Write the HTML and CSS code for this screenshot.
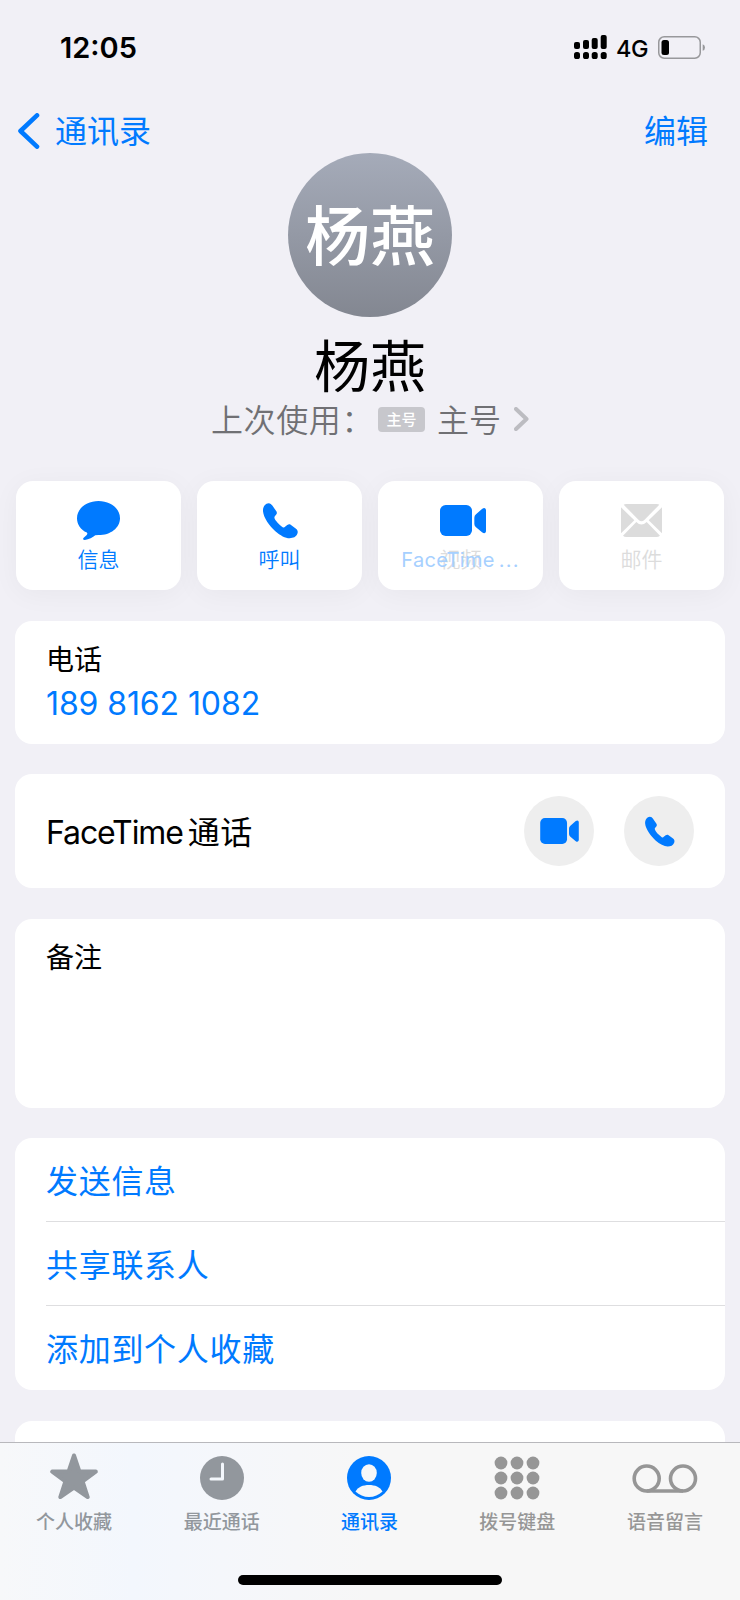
FILE: index.html
```
<!DOCTYPE html>
<html lang="zh-CN">
<head>
  <meta charset="UTF-8">
  <meta name="viewport" content="width=device-width, initial-scale=1.0">
  <title>通讯录 - 杨燕</title>
  <link rel="stylesheet" href="styles.css">
</head>
<body>
  <!-- 共用图标 -->
  <svg class="sprite" aria-hidden="true">
    <symbol id="icon-phone" viewBox="0 0 108 110">
      <path d="M20 3C25 3 28 6 31 10L42 26C46 31 45 35 42 38L38 43C36 46 38 50 42 56C48 64 56 71 62 75C65 77 67 76 70 73C75 69 79 65 85 67L101 79C108 84 108 90 106 95C102 105 94 108 83 108C70 108 55 100 40 87C22 70 5 47 3 27C2 14 10 3 20 3Z"/>
    </symbol>
    <symbol id="icon-video" viewBox="0 0 138 93">
      <rect x="0" y="0" width="96" height="93" rx="17"/>
      <path d="M103 38Q103 32 108 28L126 12Q130 9 133 9Q138 10 138 15V79Q138 84 133 85Q130 85 126 82L108 67Q103 63 103 57Z"/>
    </symbol>
  </svg>

  <div class="screen">
    <div class="status-bar">
      <span class="time">12:05</span>
      <div class="status-right">
        <svg class="signal" width="33" height="24" viewBox="0 0 33 24">
          <rect x="0" y="7" width="6" height="7" rx="2"/>
          <rect x="9" y="5" width="6" height="9" rx="2"/>
          <rect x="17.7" y="3" width="6" height="11" rx="2"/>
          <rect x="26.7" y="0" width="6" height="14" rx="2"/>
          <rect x="0" y="17" width="6" height="7" rx="2.6"/>
          <rect x="9" y="17" width="6" height="7" rx="2.6"/>
          <rect x="17.7" y="17" width="6" height="7" rx="2.6"/>
          <rect x="26.7" y="17" width="6" height="7" rx="2.6"/>
        </svg>
        <span class="network">4G</span>
        <svg class="battery" width="47" height="23" viewBox="0 0 47 23">
          <rect x=".75" y=".75" width="41.5" height="21.5" rx="5.5" fill="none" stroke="#98989b" stroke-width="1.5"/>
          <rect x="3.5" y="4" width="7.5" height="15" rx="2.5"/>
          <path d="M44.7 8.3Q47 9 47 11.5Q47 14 44.7 14.7Z" fill="#98989b"/>
        </svg>
      </div>
    </div>

    <div class="nav-bar">
      <a class="nav-back">
        <svg width="22" height="36" viewBox="0 0 22 36"><path d="M19 2.4L2.5 18L19 33.6"/></svg>
        <span>通讯录</span>
      </a>
      <a class="nav-edit">编辑</a>
    </div>

    <div class="profile">
      <div class="avatar">杨燕</div>
      <h1 class="name">杨燕</h1>
      <div class="last-used">
        <span class="last-label">上次使用：</span>
        <span class="badge">主号</span>
        <span>主号</span>
        <svg width="15" height="24" viewBox="0 0 15 24"><path d="M2 2L12.5 12L2 22"/></svg>
      </div>
    </div>

    <div class="actions">
      <div class="action">
        <svg width="43" height="39" viewBox="0 0 127 115"><path d="M63.500 0C28.500 0 0 22 0 50.500C0 69 11 84 29 93C32 95 30 98 28 101L19 109Q16 115 23 115C35 114 47 106 54 101L63.500 100.500C99 100.500 127 79 127 50.500C127 22 99 0 63.500 0Z"/></svg>
        <span>信息</span>
      </div>
      <div class="action">
        <svg width="36" height="37"><use href="#icon-phone"/></svg>
        <span>呼叫</span>
      </div>
      <div class="action action-video">
        <svg width="46" height="31"><use href="#icon-video"/></svg>
        <span class="label-old">视频</span>
        <span class="label-new">FaceTime<span class="dots">...</span></span>
      </div>
      <div class="action disabled">
        <svg width="41" height="33" viewBox="0 0 123 99">
          <path d="M8 2Q11 0 16 0H107Q112 0 115 2L70 48Q61.500 56 53 48Z"/>
          <path d="M0 10L40 49L0 88ZM123 10L83 49L123 88Z"/>
          <path d="M6 95L46 54Q61 69 77 54L117 95Q112 99 107 99H16Q10 99 6 95Z"/>
        </svg>
        <span>邮件</span>
      </div>
    </div>

    <div class="card phone-card">
      <div class="field-title">电话</div>
      <div class="phone-number">189 8162 1082</div>
    </div>

    <div class="card facetime-card">
      <span class="facetime-title">FaceTime<span class="cjk">通话</span></span>
      <div class="round-buttons">
        <a class="round-btn"><svg width="39" height="26"><use href="#icon-video"/></svg></a>
        <a class="round-btn"><svg width="31" height="31"><use href="#icon-phone"/></svg></a>
      </div>
    </div>

    <div class="card notes-card">
      <div class="field-title">备注</div>
    </div>

    <div class="card list-card">
      <a class="list-item">发送信息</a>
      <a class="list-item">共享联系人</a>
      <a class="list-item">添加到个人收藏</a>
    </div>

    <div class="card next-card"></div>

    <div class="tab-bar">
      <div class="tabs">
        <div class="tab tab-cool">
          <svg width="50" height="48" viewBox="0 0 50 48"><path d="M25 2.500L30.300 18.200L46.800 18.600L33.600 28.300L38.700 44L25 34.600L11.300 44L16.400 28.300L3.200 18.600L19.700 18.200Z" stroke="currentColor" stroke-width="4" stroke-linejoin="round"/></svg>
          <span>个人收藏</span>
        </div>
        <div class="tab tab-cool">
          <svg width="44" height="48" viewBox="0 0 44 48"><circle cx="22" cy="25" r="22"/><path d="M22.500 11V26H11" fill="none" stroke="#f3f7fc" stroke-width="3" stroke-linecap="round" stroke-linejoin="round"/></svg>
          <span>最近通话</span>
        </div>
        <div class="tab active">
          <svg width="44" height="48" viewBox="0 0 44 48"><circle cx="22" cy="25" r="22"/><ellipse cx="22" cy="20" rx="7.800" ry="8.700" fill="#f6f7f9"/><path d="M8.500 38.500C11 34 16 32 22 32S33 34 35.500 38.500C32 42 27 44 22 44S12 42 8.500 38.500Z" fill="#f6f7f9"/></svg>
          <span>通讯录</span>
        </div>
        <div class="tab">
          <svg width="46" height="48" viewBox="0 0 46 48">
            <circle cx="7" cy="10" r="6.400"/><circle cx="23" cy="10" r="6.400"/><circle cx="39" cy="10" r="6.400"/>
            <circle cx="7" cy="25" r="6.400"/><circle cx="23" cy="25" r="6.400"/><circle cx="39" cy="25" r="6.400"/>
            <circle cx="7" cy="40" r="6.400"/><circle cx="23" cy="40" r="6.400"/><circle cx="39" cy="40" r="6.400"/>
          </svg>
          <span>拨号键盘</span>
        </div>
        <div class="tab">
          <svg width="66" height="48" viewBox="0 0 66 48"><g fill="none" stroke="currentColor" stroke-width="3.600"><circle cx="14.700" cy="25.500" r="12.500"/><circle cx="51" cy="25.500" r="12.500"/><path d="M14.700 38H51"/></g></svg>
          <span>语音留言</span>
        </div>
      </div>
      <div class="home-indicator"></div>
    </div>
  </div>
</body>
</html>
```

FILE: styles.css
```
* {
  box-sizing: border-box;
}
body {
  margin: 0;
  font-family: Inter, 'Noto Sans CJK SC', sans-serif;
  background-color: #f1f0f6;
  color: #000;
}
svg {
  display: block;
  fill: currentColor;
}
.sprite {
  display: none;
}
.screen {
  display: flex;
  flex-direction: column;
  width: 740px;
  height: 1600px;
  overflow: hidden;
}
/* 状态栏 */
.status-bar {
  display: flex;
  justify-content: space-between;
  align-items: center;
  flex: none;
  height: 94px;
  padding: 0 35px 0 60px;
}
.time {
  font-size: 29px;
  font-weight: 600;
}
.status-right {
  display: flex;
  align-items: center;
}
.network {
  margin: 2px 10px 0 9px;
  font-size: 23.5px;
  font-weight: 500;
  letter-spacing: -0.5px;
}
/* 导航栏 */
.nav-bar {
  display: flex;
  justify-content: space-between;
  align-items: center;
  flex: none;
  height: 59px;
  padding: 14px 32px 0 18px;
  color: #007aff;
  font-size: 32px;
  line-height: 46px;
}
.nav-bar span,
.nav-edit {
  padding-top: 2px;
}
.nav-back {
  display: flex;
  align-items: center;
  gap: 15px;
}
.nav-back svg {
  fill: none;
  stroke: currentColor;
  stroke-width: 4.6;
  stroke-linecap: round;
  stroke-linejoin: round;
}
/* 联系人信息 */
.profile {
  display: flex;
  flex-direction: column;
  align-items: center;
  flex: none;
  height: 328px;
}
.avatar {
  display: flex;
  justify-content: center;
  align-items: center;
  width: 164px;
  height: 164px;
  padding-top: 3px;
  border-radius: 50%;
  background: linear-gradient(#a5abb9, #838791);
  color: #fff;
  font-size: 65px;
  font-weight: 500;
  line-height: 1;
}
.name {
  margin: 20px 0 0;
  font-size: 56px;
  font-weight: 400;
  line-height: 60px;
}
.last-used {
  display: flex;
  align-items: center;
  height: 43px;
  color: #707074;
  font-size: 32px;
  font-weight: 350;
}
.last-used span {
  margin-top: -1px;
}
.last-used .last-label {
  width: 167px;
  letter-spacing: 0.6px;
  white-space: nowrap;
}
.last-used .badge {
  width: 47px;
  height: 25px;
  margin: 1px 12px 0 0;
  border-radius: 4px;
  background-color: #c7c7cc;
  color: #fff;
  font-size: 15px;
  font-weight: 500;
  line-height: 25px;
  text-align: center;
}
.last-used svg {
  margin-left: 13px;
  fill: none;
  stroke: #bcbcc1;
  stroke-width: 4;
  stroke-linecap: round;
  stroke-linejoin: round;
}
/* 快捷操作 */
.actions {
  display: grid;
  grid-template-columns: repeat(4, 1fr);
  gap: 16px;
  flex: none;
  height: 109px;
  margin: 0 16px 31px;
}
.action {
  position: relative;
  display: grid;
  grid-template-rows: 79px;
  justify-items: center;
  align-items: center;
  border-radius: 17px;
  background-color: #fff;
  box-shadow: 0 4px 28px rgba(0, 0, 0, 0.045);
  color: #007aff;
  font-size: 21px;
  font-weight: 350;
  line-height: 30px;
}
.action > span {
  position: absolute;
  top: 64px;
  white-space: nowrap;
}
.action-video svg {
  margin-left: 4px;
}
.action .label-old {
  color: #dcdcdc;
}
.action .label-new {
  color: #a6d0ff;
  font-size: 20px;
  font-weight: 400;
  letter-spacing: 0.3px;
}
.dots {
  margin-left: 4px;
  letter-spacing: 1.2px;
}
.disabled {
  color: #dcdcdc;
}
/* 卡片 */
.card {
  flex: none;
  margin: 0 15px;
  padding: 0 31px;
  border-radius: 17px;
  background-color: #fff;
}
.field-title {
  font-size: 28px;
  line-height: 40px;
}
.phone-card {
  height: 123px;
  padding-top: 19px;
}
.phone-number {
  margin-top: 4px;
  color: #007aff;
  font-size: 32px;
  line-height: 40px;
  letter-spacing: -0.1px;
}
.facetime-card {
  display: flex;
  justify-content: space-between;
  align-items: center;
  height: 114px;
  margin-top: 30px;
}
.facetime-title {
  margin-top: -3px;
  font-size: 32px;
  letter-spacing: -1.1px;
}
.cjk {
  margin-left: 5px;
  letter-spacing: 0.5px;
}
.round-buttons {
  display: flex;
  gap: 30px;
}
.round-btn {
  display: flex;
  justify-content: center;
  align-items: center;
  width: 70px;
  height: 70px;
  border-radius: 50%;
  background-color: #eee;
  color: #007aff;
}
.notes-card {
  height: 189px;
  margin-top: 31px;
  padding-top: 19px;
}
.list-card {
  height: 252px;
  margin-top: 30px;
  padding-right: 0;
}
.list-item {
  display: block;
  height: 84px;
  border-bottom: 1px solid #dedee0;
  color: #007aff;
  font-size: 32px;
  letter-spacing: 0.7px;
  line-height: 87px;
}
.list-item:last-child {
  border-bottom: none;
}
.next-card {
  height: 21px;
  margin-top: 31px;
  border-radius: 17px 17px 0 0;
}
/* 底部标签栏 */
.tab-bar {
  flex: none;
  height: 158px;
  border-top: 1px solid #b8b8bc;
  background: linear-gradient(90deg, #f7f8fa 0, #f3f7fd 18%, #f5f7fb 30%, #f7f7f7 50%);
}
.tabs {
  display: grid;
  grid-template-columns: repeat(5, 1fr);
  height: 132px;
  margin-right: 1px;
}
.tab {
  display: flex;
  flex-direction: column;
  align-items: center;
  padding-top: 10px;
  color: #969696;
  font-size: 19px;
  font-weight: 500;
  line-height: 28px;
}
.tab span {
  margin-top: 8px;
}
.tab-cool {
  color: #92979d;
}
.active {
  color: #007aff;
}
.home-indicator {
  width: 264px;
  height: 10px;
  margin: 0 auto;
  border-radius: 5px;
  background-color: #000;
}
```
